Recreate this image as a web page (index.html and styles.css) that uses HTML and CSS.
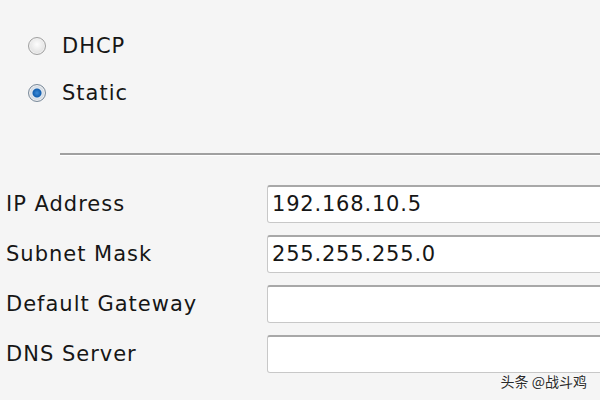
FILE: index.html
```html
<!DOCTYPE html>
<html lang="en">
  <head>
    <meta charset="utf-8">
    <title>IP Configuration</title>
    <link rel="stylesheet" href="styles.css">
  </head>
  <body>
    <div class="modes">
      <label class="mode"><span class="radio"></span>DHCP</label>
      <label class="mode"><span class="radio on"></span>Static</label>
    </div>

    <hr class="sep">

    <div class="fields">
      <span class="name">IP Address</span>
      <div class="box">192.168.10.5</div>
      <span class="name">Subnet Mask</span>
      <div class="box">255.255.255.0</div>
      <span class="name">Default Gateway</span>
      <div class="box"></div>
      <span class="name">DNS Server</span>
      <div class="box"></div>
    </div>

    <div class="mark">头条 @战斗鸡</div>
  </body>
</html>
```

FILE: styles.css
```css
html {
  font-family: "DejaVu Sans", Verdana, sans-serif;
}

body {
  margin: 0;
  width: 600px;
  height: 400px;
  background: #f5f5f5;
  color: #161616;
  overflow: hidden;
  position: relative;
}

.modes {
  padding: 33px 0 0 28px;
  display: flex;
  flex-direction: column;
  gap: 21px;
}

.mode {
  display: flex;
  align-items: center;
  gap: 16px;
  font-size: 21px;
  letter-spacing: 1px;
  height: 26px;
}

.radio {
  width: 16px;
  height: 16px;
  border-radius: 50%;
  border: 1px solid #a0a0a0;
  background: radial-gradient(circle at 50% 40%, #fdfdfd, #d6d6d6);
  box-shadow: inset 0 0 0 1px #f0f0f0;
}

.radio.on {
  border-color: #7a8a9a;
  background: radial-gradient(circle, #3a8ad8 0, #1360b0 4px, #dfe6ee 5px, #c9d2dc 8px);
}

.sep {
  margin: 47px 0 0 60px;
  border: 0;
  height: 2px;
  background: #a0a0a0;
  border-bottom: 1px solid #fff;
}

.fields {
  margin-top: 29px;
  display: grid;
  grid-template-columns: 261px 1fr;
  row-gap: 12px;
  padding-left: 6px;
  align-items: center;
}

.name {
  font-size: 21px;
  letter-spacing: 1px;
}

.box {
  height: 38px;
  box-sizing: border-box;
  background: #fff;
  border: 1px solid #c8c8c8;
  border-top: 2px solid #a8a8a8;
  border-radius: 3px;
  margin-right: -4px;
  padding-left: 4px;
  font-size: 21px;
  letter-spacing: 0.8px;
  line-height: 34px;
}

.mark {
  position: absolute;
  right: 13px;
  bottom: 9px;
  font-family: "Noto Sans CJK SC", sans-serif;
  font-size: 14px;
  color: #2a2a2a;
  text-shadow: 0 0 2px #fff;
}
```
